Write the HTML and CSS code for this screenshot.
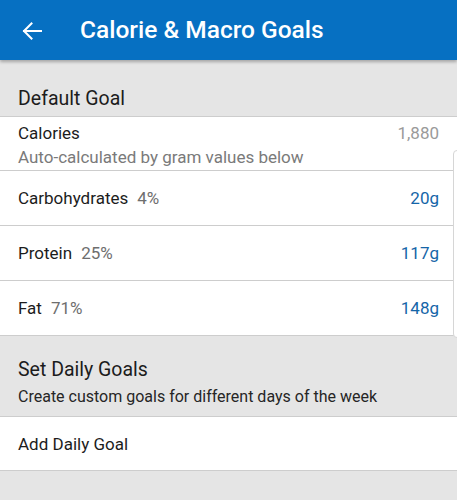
FILE: index.html
```html
<!DOCTYPE html>
<html>
<head>
<meta charset="utf-8">
<link rel="stylesheet" href="styles.css">
</head>
<body>
<div class="app">
  <header class="bar">
    <svg class="back" width="20" height="18" viewBox="0 0 20 18">
      <path d="M19 9H2M9.5 1.5L2 9l7.5 7.5" fill="none" stroke="#fff" stroke-width="2" stroke-linecap="square"/>
    </svg>
    <h1 class="title">Calorie &amp; Macro Goals</h1>
  </header>
  <main class="content">
    <div class="section-head s1">
      <div class="section-title">Default Goal</div>
    </div>
    <div class="rows">
      <div class="row row-cal">
        <div class="row-main">
          <div class="label">Calories</div>
          <div class="sub">Auto-calculated by gram values below</div>
        </div>
        <div class="val muted">1,880</div>
      </div>
      <div class="row">
        <div class="label">Carbohydrates<span class="pct">4%</span></div>
        <div class="val blue">20g</div>
      </div>
      <div class="row">
        <div class="label">Protein<span class="pct">25%</span></div>
        <div class="val blue">117g</div>
      </div>
      <div class="row">
        <div class="label">Fat<span class="pct">71%</span></div>
        <div class="val blue">148g</div>
      </div>
      <div class="edge"></div>
    </div>
    <div class="section-head s2">
      <div class="section-title">Set Daily Goals</div>
      <div class="section-sub">Create custom goals for different days of the week</div>
    </div>
    <div class="row row-add">
      <div class="label">Add Daily Goal</div>
    </div>
  </main>
</div>
</body>
</html>
```

FILE: styles.css
```css
* { box-sizing: border-box; margin: 0; padding: 0; }
html, body { width: 457px; height: 500px; overflow: hidden; }
body { font-family: Roboto, "Noto Sans", sans-serif; background: #e5e5e5; color: #1e1e1e; }
.app { display: flex; flex-direction: column; height: 500px; }
.bar {
  height: 60px; background: #0670c2; display: flex; align-items: center;
  padding-left: 22px; box-shadow: 0 2px 3px rgba(0,0,0,0.28); position: relative; z-index: 2;
}
.back { display: block; flex: none; margin-top: 1px; }
.title { margin-left: 38px; color: #fff; font-size: 24.5px; font-weight: 500; line-height: 28px; }
.content { flex: 1; background: #e5e5e5; }
.section-head { padding: 0 18px; border-bottom: 1px solid #cdcdcd; }
.s1 { height: 57px; padding-top: 27px; }
.s2 { height: 81px; padding-top: 22px; }
.section-title { font-size: 19.5px; line-height: 24px; color: #1c1c1c; }
.section-sub { font-size: 16px; line-height: 22px; color: #262626; margin-top: 4px; }
.rows { position: relative; background: #fff; }
.row {
  display: flex; justify-content: space-between; align-items: center;
  padding: 0 18px; height: 55px; background: #fff; border-bottom: 1px solid #cdcdcd;
}
.row-cal { height: 54px; align-items: flex-start; padding-top: 4px; }
.label { font-size: 17px; line-height: 24px; color: #1c1c1c; }
.pct { color: #6e6e6e; margin-left: 9px; }
.sub { font-size: 17px; line-height: 22px; color: #7a7a7a; margin-top: 1px; }
.val { font-size: 17px; line-height: 24px; }
.muted { color: #9a9a9a; }
.blue { color: #1565a8; }
.row-add { height: 54px; }
.edge {
  position: absolute; right: -4px; top: 33px; width: 8px; height: 188px;
  border: 1px solid #d6d6d6; border-radius: 4px; background: #fff;
}
```
